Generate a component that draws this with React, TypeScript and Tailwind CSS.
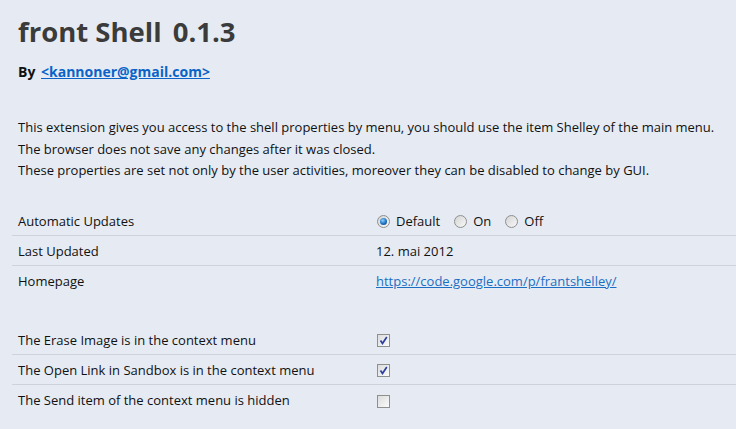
import React from 'react';

const font = { fontFamily: '"Open Sans", "Noto Sans", sans-serif' };

const Radio: React.FC<{ checked?: boolean; label: string }> = ({ checked, label }) => (
  <label className="flex items-center gap-[6px]">
    <span className="relative flex h-[13px] w-[13px] items-center justify-center rounded-full border border-[#8e8f8f] bg-gradient-to-br from-[#d4d4d4] to-[#f8f8f8]">
      {checked && (
        <span className="h-[7px] w-[7px] rounded-full bg-[radial-gradient(circle_at_40%_35%,#8fd1ff,#1b6fbf_55%,#0c3f7a)]"></span>
      )}
    </span>
    <span>{label}</span>
  </label>
);

const Check: React.FC<{ checked?: boolean }> = ({ checked }) => (
  <span className="flex h-[13px] w-[13px] items-center justify-center border border-[#8e8f8f] bg-gradient-to-br from-[#dcdcdc] to-[#fbfbfb]">
    {checked && (
      <svg width="9" height="9" viewBox="0 0 9 9">
        <path d="M1.5 4.5 L3.5 7.5 L7.8 1" fill="none" stroke="#2a3f9e" strokeWidth="1.7" />
      </svg>
    )}
  </span>
);

const Row: React.FC<{ label: string; last?: boolean; children: React.ReactNode }> = ({ label, last, children }) => (
  <div className={`flex h-[30px] items-center pt-[3px] ${last ? '' : 'border-b border-[#cdd3dd]'}`}>
    <div className="w-[364px] pl-[6px]">{label}</div>
    <div className="flex items-center">{children}</div>
  </div>
);

export default function App() {
  return (
    <div className="h-[429px] w-[736px] overflow-hidden bg-[#e6ebf3] text-[13px] text-[#111]" style={font}>
      <div className="pl-[12px] pt-[14px]">
        <h1 className="ml-[6px] text-[27.5px] font-bold leading-[36px] text-[#3b3b3b]">
          front Shell <span className="ml-[4px]">0.1.3</span>
        </h1>
        <div className="ml-[6px] mt-[12px] text-[14px] font-bold leading-[20px]">
          By{' '}
          <a className="ml-[2px] text-[#0a64c8] underline" href="#">
            &lt;kannoner@gmail.com&gt;
          </a>
        </div>
        <p className="ml-[6px] mt-[35px] leading-[21.5px]">
          This extension gives you access to the shell properties by menu, you should use the item Shelley of the main menu.
          <br />
          The browser does not save any changes after it was closed.
          <br />
          These properties are set not only by the user activities, moreover they can be disabled to change by GUI.
        </p>

        <div className="mt-[24px]">
          <Row label="Automatic Updates">
            <div className="flex items-center gap-[14px] pl-[1px]">
              <Radio checked label="Default" />
              <Radio label="On" />
              <Radio label="Off" />
            </div>
          </Row>
          <Row label="Last Updated">12. mai 2012</Row>
          <Row label="Homepage" last>
            <a className="text-[#1a6fc4] underline" href="#">
              https://code.google.com/p/frantshelley/
            </a>
          </Row>
        </div>

        <div className="mt-[29px]">
          <Row label="The Erase Image is in the context menu">
            <span className="pl-[1px]"><Check checked /></span>
          </Row>
          <Row label="The Open Link in Sandbox is in the context menu">
            <span className="pl-[1px]"><Check checked /></span>
          </Row>
          <Row label="The Send item of the context menu is hidden" last>
            <span className="pl-[1px]"><Check /></span>
          </Row>
        </div>
      </div>
    </div>
  );
}
